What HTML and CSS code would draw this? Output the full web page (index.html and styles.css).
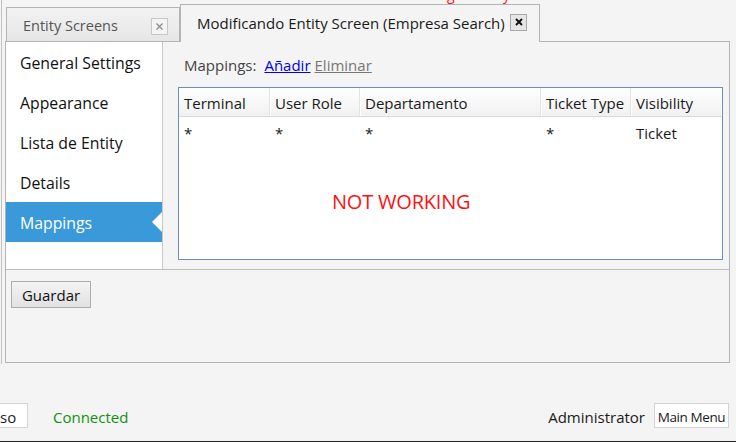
FILE: index.html
```html
<!DOCTYPE html>
<html>
<head>
<meta charset="utf-8">
<link rel="stylesheet" href="styles.css">
</head>
<body>
<div class="overflow-text"><span class="ov-g">g</span><span class="ov-y">y</span></div>
<div class="shell">
  <div class="main">
    <div class="tabs">
      <div class="tab tab-inactive">
        <span class="tab-title">Entity Screens</span>
        <span class="close close-light"><svg width="7" height="7" viewBox="0 0 7 7"><path d="M0.5 0.5L6.5 6.5M6.5 0.5L0.5 6.5" stroke="#8a8a8a" stroke-width="1.2"/></svg></span>
      </div>
      <div class="tab tab-active">
        <span class="tab-title">Modificando Entity Screen (Empresa Search)</span>
        <span class="close close-dark"><svg width="8" height="8" viewBox="0 0 8 8"><path d="M1 1L7 7M7 1L1 7" stroke="#111" stroke-width="1.9"/></svg></span>
      </div>
    </div>
    <div class="panel">
      <div class="upper">
        <nav class="nav">
          <div class="nav-item">General Settings</div>
          <div class="nav-item">Appearance</div>
          <div class="nav-item">Lista de Entity</div>
          <div class="nav-item">Details</div>
          <div class="nav-item selected">Mappings<span class="notch"></span></div>
        </nav>
        <section class="content">
          <div class="toolbar">
            <span class="label">Mappings:</span>
            <a class="link add">Añadir</a>
            <a class="link remove">Eliminar</a>
          </div>
          <div class="grid">
            <div class="row header">
              <div class="cell c1">Terminal</div>
              <div class="cell c2">User Role</div>
              <div class="cell c3">Departamento</div>
              <div class="cell c4">Ticket Type</div>
              <div class="cell c5">Visibility</div>
            </div>
            <div class="row data">
              <div class="cell c1">*</div>
              <div class="cell c2">*</div>
              <div class="cell c3">*</div>
              <div class="cell c4">*</div>
              <div class="cell c5">Ticket</div>
            </div>
            <div class="message">NOT WORKING</div>
          </div>
        </section>
      </div>
      <div class="lower">
        <button class="btn">Guardar</button>
      </div>
    </div>
  </div>
</div>
<footer class="status">
  <div class="status-left">
    <div class="box box-cut">so</div>
    <span class="connected">Connected</span>
  </div>
  <div class="status-right">
    <span class="user">Administrator</span>
    <div class="box menu">Main Menu</div>
  </div>
</footer>
</body>
</html>
```

FILE: styles.css
```css
html, body {
  margin: 0;
  padding: 0;
}
body {
  width: 736px;
  height: 442px;
  overflow: hidden;
  background: #f4f4f4;
  font-family: "Open Sans", "Noto Sans", sans-serif;
  color: #1a1a1a;
  position: relative;
  box-sizing: border-box;
  border-bottom: 1px solid #222;
}
.overflow-text {
  position: absolute;
  top: -14px;
  left: 0;
  width: 736px;
  height: 20px;
  color: #ff1010;
  font-size: 14px;
  line-height: 18px;
}
.ov-g { position: absolute; left: 447px; }
.ov-y { position: absolute; left: 503px; }

.shell {
  margin-left: 1px;
  border-left: 1px solid #c2c2c2;
  height: 364px;
  display: flex;
}
.main {
  margin-left: 3px;
  width: 725px;
  display: flex;
  flex-direction: column;
}
.tabs {
  height: 42px;
  display: flex;
  align-items: flex-end;
  position: relative;
  z-index: 2;
  margin-bottom: -1px;
}
.tab {
  box-sizing: border-box;
  display: flex;
  align-items: center;
  border: 1px solid #b4b4b4;
}
.tab-title { padding-top: 2px; }
.tab-inactive {
  margin-left: 1px;
  width: 174px;
  height: 35px;
  padding-left: 16px;
  font-size: 14.5px;
  color: #555;
  background: linear-gradient(#f2f2f2, #e6e6e6);
  border-bottom: 1px solid #b4b4b4;
}
.tab-inactive .tab-title { width: 128px; }
.tab-active {
  width: 360px;
  height: 38px;
  padding-left: 16px;
  padding-bottom: 3px;
  font-size: 15px;
  color: #1a1a1a;
  background: #f4f4f4;
  border-bottom: none;
}
.tab-active .tab-title { width: 313px; }
.close {
  box-sizing: border-box;
  width: 17px;
  height: 17px;
  display: flex;
  align-items: center;
  justify-content: center;
  border: 1px solid #c8c8c8;
}
.close svg { display: block; }
.close-light {
  background: #f4f4f4;
  margin-top: 3px;
}
.close-dark {
  background: #e6e6e6;
  border-color: #a8a8a8;
}
.panel {
  box-sizing: border-box;
  height: 322px;
  border: 1px solid #b4b4b4;
  display: flex;
  flex-direction: column;
}
.upper {
  height: 227px;
  display: flex;
  border-bottom: 1px solid #bdbdbd;
}
.nav {
  width: 156px;
  background: #fff;
  border-right: 1px solid #c8c8c8;
}
.nav-item {
  box-sizing: border-box;
  height: 40px;
  display: flex;
  align-items: center;
  padding: 2px 0 0 14px;
  font-size: 15.8px;
  color: #111;
  position: relative;
}
.nav-item.selected {
  background: #3a99d9;
  color: #fff;
}
.notch {
  position: absolute;
  right: 0;
  top: 10px;
  width: 0;
  height: 0;
  border-top: 10px solid transparent;
  border-bottom: 10px solid transparent;
  border-right: 10px solid #fff;
}
.content {
  flex: 1;
  padding: 13px 6px 0 15px;
  display: flex;
  flex-direction: column;
}
.toolbar {
  height: 32px;
  display: flex;
  align-items: flex-start;
  font-size: 15px;
  gap: 4px;
  padding-left: 6px;
}
.label { color: #444; margin-right: 4px; }
.link { text-decoration: underline; cursor: pointer; }
.add { color: #0000ee; }
.remove { color: #777; }
.grid {
  box-sizing: border-box;
  height: 173px;
  background: #fff;
  border: 1px solid #6a8fba;
  display: flex;
  flex-direction: column;
}
.row {
  display: flex;
  font-size: 15px;
}
.header {
  height: 28px;
  background: linear-gradient(#fff, #f1f1f1);
  border-bottom: 1px solid #dadada;
}
.header .cell {
  border-right: 1px solid #e3e3e3;
  box-shadow: 1px 0 0 #fff;
}
.data {
  height: 30px;
}
.cell {
  box-sizing: border-box;
  padding: 2px 0 0 5px;
  height: 100%;
  display: flex;
  align-items: center;
}
.c1 { width: 91px; }
.c2 { width: 90px; }
.c3 { width: 181px; }
.c4 { width: 90px; }
.c5 { width: 90px; border-right: none !important; }
.message {
  margin: 41px 0 0 153px;
  color: #ff1111;
  font-size: 20px;
  letter-spacing: -0.2px;
}
.lower {
  flex: 1;
  padding: 11px 0 0 5px;
}
.btn {
  box-sizing: border-box;
  width: 80px;
  height: 27px;
  font-family: inherit;
  font-size: 15px;
  color: #111;
  background: linear-gradient(#f3f3f3, #e2e2e2);
  border: 1px solid #adadad;
  border-radius: 0;
  padding: 1px 0 0;
}
.status {
  position: absolute;
  left: 0;
  right: 0;
  top: 403px;
  height: 25px;
  display: flex;
  justify-content: space-between;
  align-items: center;
}
.status-left, .status-right {
  display: flex;
  align-items: center;
  height: 100%;
  padding-top: 3px;
}
.box {
  box-sizing: border-box;
  height: 25px;
  margin-top: -3px;
  background: #fff;
  border: 1px solid #d4d4d4;
  display: flex;
  align-items: center;
  font-size: 15px;
}
.box-cut {
  width: 28px;
  border-left: none;
  padding-top: 2px;
  overflow: hidden;
}
.connected {
  margin-left: 25px;
  color: #109010;
  font-size: 15px;
}
.user {
  font-size: 15px;
  margin-right: 9px;
}
.menu {
  width: 75px;
  justify-content: center;
  font-size: 13.5px;
  padding-top: 2px;
  margin-right: 7px;
  letter-spacing: -0.4px;
}
```
